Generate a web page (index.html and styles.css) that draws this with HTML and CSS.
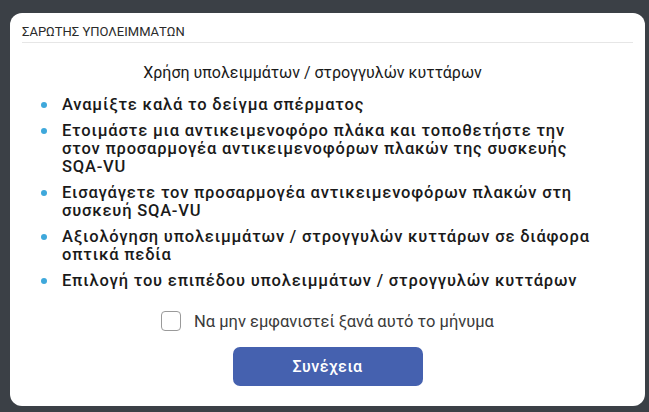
FILE: index.html
```html
<!DOCTYPE html>
<html lang="el">
<head>
<meta charset="utf-8">
<title>Σαρωτής υπολειμμάτων</title>
<link rel="stylesheet" href="styles.css">
</head>
<body>
<div class="dialog">
  <div class="dialog-header">ΣΑΡΩΤΗΣ ΥΠΟΛΕΙΜΜΑΤΩΝ</div>
  <div class="dialog-body">
    <h2 class="dialog-title">Χρήση υπολειμμάτων / στρογγυλών κυττάρων</h2>
    <ul class="steps">
      <li>Αναμίξτε καλά το δείγμα σπέρματος</li>
      <li>Ετοιμάστε μια αντικειμενοφόρο πλάκα και τοποθετήστε την στον προσαρμογέα αντικειμενοφόρων πλακών της συσκευής SQA-VU</li>
      <li>Εισαγάγετε τον προσαρμογέα αντικειμενοφόρων πλακών στη συσκευή SQA-VU</li>
      <li>Αξιολόγηση υπολειμμάτων / στρογγυλών κυττάρων σε διάφορα οπτικά πεδία</li>
      <li>Επιλογή του επιπέδου υπολειμμάτων / στρογγυλών κυττάρων</li>
    </ul>
    <label class="dont-show">
      <span class="checkbox"></span>
      <span>Να μην εμφανιστεί ξανά αυτό το μήνυμα</span>
    </label>
    <button class="btn-continue" type="button">Συνέχεια</button>
  </div>
</div>
</body>
</html>
```

FILE: styles.css
```css
html, body {
  margin: 0;
  padding: 0;
}

body {
  width: 649px;
  height: 412px;
  background: #3b4046;
  font-family: Roboto, "Noto Sans", sans-serif;
  color: #1d1d1d;
  padding: 13px 4px 6px 10px;
  box-sizing: border-box;
}

.dialog {
  background: #ffffff;
  border-radius: 12px;
  height: 393px;
  display: flex;
  flex-direction: column;
  box-sizing: border-box;
  padding: 0 12px;
}

.dialog-header {
  font-size: 13px;
  color: #2a2a2a;
  padding: 12px 0 3px;
  line-height: 14px;
  border-bottom: 1px solid #e6e6e6;
}

.dialog-body {
  display: flex;
  flex-direction: column;
  align-items: center;
}

.dialog-title {
  margin: 20px 0 0;
  padding-right: 30px;
  font-size: 16px;
  font-weight: 400;
  line-height: 20px;
  color: #1a1a1a;
}

/* steps wrap inside a fixed measure: text runs from x=62 to x=600 */
.steps {
  align-self: stretch;
  list-style: none;
  margin: 13px 0 0;
  padding: 0 33px 0 40px;
}

.steps li {
  position: relative;
  font-size: 16.5px;
  font-weight: 500;
  letter-spacing: 0.8px;
  line-height: 18px;
  margin-bottom: 8px;
  color: #1a1a1a;
}

.steps li::before {
  content: "";
  position: absolute;
  left: -21px;
  top: 6px;
  width: 6px;
  height: 6px;
  border-radius: 50%;
  background: #3ea8db;
}

.dont-show {
  display: flex;
  align-items: center;
  gap: 13px;
  margin-top: 13px;
  font-size: 16.5px;
  color: #3a3a3a;
}

.checkbox {
  width: 20px;
  height: 20px;
  border: 1px solid #9a9a9a;
  border-radius: 4px;
  box-sizing: border-box;
}

.btn-continue {
  margin-top: 16px;
  width: 190px;
  height: 39px;
  border: none;
  border-radius: 7px;
  background: #4561af;
  color: #ffffff;
  font-family: Roboto, "Noto Sans", sans-serif;
  font-size: 16px;
  font-weight: 500;
  letter-spacing: 0.5px;
}
```
